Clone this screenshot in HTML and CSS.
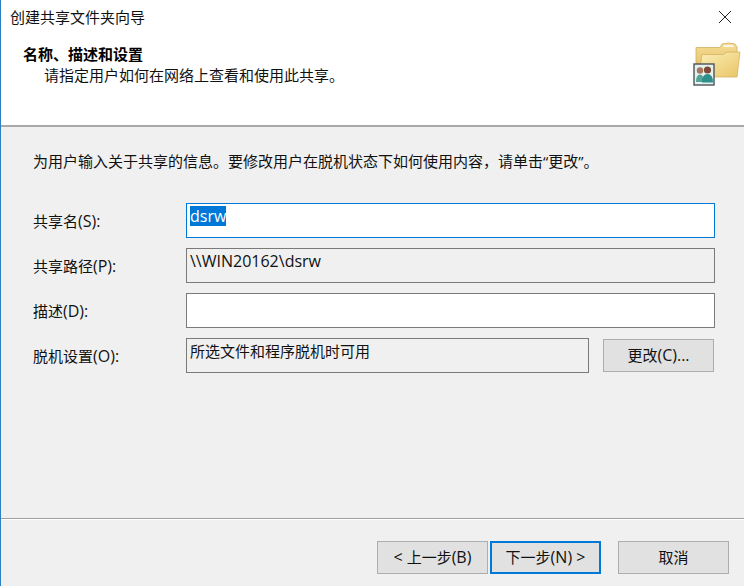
FILE: index.html
```html
<!DOCTYPE html>
<html lang="zh-CN">
<head>
<meta charset="utf-8">
<title>创建共享文件夹向导</title>
<link rel="stylesheet" href="styles.css">
</head>
<body>
<div class="dialog">
  <header class="head">
    <div class="titlebar">
      <span class="title">创建共享文件夹向导</span>
      <svg class="close" width="14" height="14" viewBox="0 0 14 14"><path d="M1 1L13 13M13 1L1 13" stroke="#222" stroke-width="1" fill="none"/></svg>
    </div>
    <div class="banner">
      <div class="banner-text">
        <h1>名称、描述和设置</h1>
        <p>请指定用户如何在网络上查看和使用此共享。</p>
      </div>
      <svg class="folder" width="50" height="50" viewBox="0 0 50 50">
        <defs>
          <linearGradient id="f1" x1="0" y1="0" x2="0" y2="1"><stop offset="0" stop-color="#f5dc96"/><stop offset="1" stop-color="#e2bd5c"/></linearGradient>
          <linearGradient id="f2" x1="0" y1="0" x2="1" y2="1"><stop offset="0" stop-color="#fcefb8"/><stop offset="1" stop-color="#e9c567"/></linearGradient>
        </defs>
        <path d="M3 5.500L27 5.500L29 2Q36 0 42 2L44 5L44 30L3 30Z" fill="url(#f1)" stroke="#cfae62" stroke-width=".8"/>
        <path d="M31 3L40 3L41 5L30 5Z" fill="#f8f4e6"/>
        <path d="M9 12.500L30 12.500L34 10L47 10L44 35L6 35Z" fill="url(#f2)" stroke="#d5b262" stroke-width=".8"/>
        <rect x="1" y="22" width="20" height="21" fill="#e4f1f0" stroke="#4e5358" stroke-width="1.400"/>
        <circle cx="7" cy="28.500" r="3.200" fill="#a9755e"/>
        <circle cx="14.500" cy="28" r="3.600" fill="#7d4a38"/>
        <path d="M3 40Q3 32.500 7 32.500Q11 32.500 11 40Z" fill="#55a596"/>
        <path d="M9 40.500Q9 32 14.500 32Q20 32 20 40.500Z" fill="#2f8f8a"/>
      </svg>
    </div>
  </header>

  <main class="content">
    <p class="intro">为用户输入关于共享的信息。要修改用户在脱机状态下如何使用内容，请单击“更改”。</p>
    <div class="form">
      <span class="label">共享名<span class="lat">(S):</span></span>
      <div class="field focus wide"><span class="selected lat">dsrw</span></div>
      <span class="label">共享路径<span class="lat">(P):</span></span>
      <div class="field readonly wide lat">\\WIN20162\dsrw</div>
      <span class="label">描述<span class="lat">(D):</span></span>
      <div class="field blank wide"></div>
      <span class="label">脱机设置<span class="lat">(O):</span></span>
      <div class="field readonly">所选文件和程序脱机时可用</div>
      <button class="btn change">更改<span class="lat">(C)...</span></button>
    </div>
  </main>

  <footer class="foot">
    <div class="pair">
      <button class="btn"><span class="lat">&lt;</span> 上一步<span class="lat">(B)</span></button>
      <button class="btn primary">下一步<span class="lat">(N) &gt;</span></button>
    </div>
    <button class="btn">取消</button>
  </footer>
</div>
</body>
</html>
```
FILE: styles.css
```css
* { box-sizing: border-box; }
html, body { margin: 0; padding: 0; }
body {
  width: 744px;
  height: 586px;
  overflow: hidden;
  font-family: "Open Sans", "Noto Sans CJK SC", sans-serif;
  font-size: 15px;
  line-height: 20px;
  color: #111;
}
.dialog {
  width: 744px;
  height: 586px;
  border-left: 1px solid #2d7fc4;
  display: flex;
  flex-direction: column;
  background: #f0f0f0;
}
.head {
  height: 127px;
  background: #fff;
  border-bottom: 2px solid #a9a9a9;
  padding: 7px 0 0 9px;
}
.titlebar {
  display: flex;
  justify-content: space-between;
  align-items: center;
  height: 20px;
  padding-right: 12px;
}
.banner {
  display: flex;
  justify-content: space-between;
  align-items: flex-start;
  padding: 0 1px 0 13px;
}
.banner-text { padding-top: 17px; }
.banner h1 {
  margin: 0;
  font-size: 15px;
  line-height: 20px;
  font-weight: 700;
  color: #000;
}
.banner p { margin: 1px 0 0 21px; line-height: 20px; }
.folder { margin-top: 15px; }
.content {
  flex: 1;
  padding: 24px 29px 0 32px;
}
.intro { margin: 0 0 32px; line-height: 20px; }
.form {
  display: grid;
  grid-template-columns: 153px 403px 14px 111px;
  grid-auto-rows: 35px;
  row-gap: 10px;
  align-items: center;
}
.lat { font-size: 16px; }
.field {
  height: 35px;
  border: 1px solid #7a7a7a;
  padding: 2px 3px;
  line-height: 20px;
  overflow: hidden;
}
.wide { grid-column: 2 / span 3; margin-right: -1px; }
.focus { border-color: #0078d7; background: #fff; }
.blank { background: #fff; }
.readonly { background: #f0f0f0; }
.selected { background: #0078d7; color: #fff; display: inline-block; height: 20px; }
.btn {
  width: 111px;
  height: 33px;
  border: 1px solid #adadad;
  background: #e1e1e1;
  font: inherit;
  color: #111;
  padding: 0 0 2px;
}
.change { grid-column: 4; }
.foot {
  height: 68px;
  flex: none;
  border-top: 1px solid #a0a0a0;
  box-shadow: inset 0 1px 0 #fff;
  display: flex;
  justify-content: space-between;
  padding: 22px 15px 0 376px;
}
.pair { display: flex; gap: 2px; }
.primary { border: 2px solid #0078d7; }
```
